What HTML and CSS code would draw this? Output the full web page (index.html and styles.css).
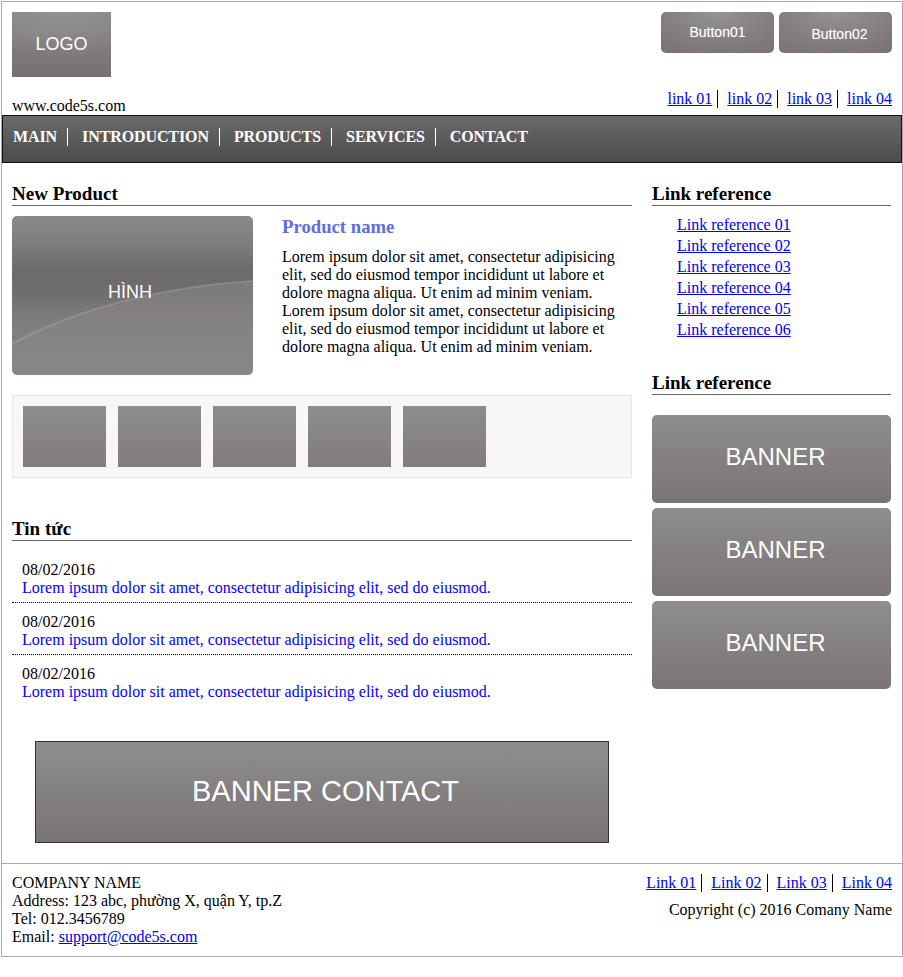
FILE: index.html
```html
<!DOCTYPE html>
<html lang="vi">
<head>
<meta charset="utf-8">
<title>code5s</title>
<link rel="stylesheet" href="styles.css">
</head>
<body>
<div class="wrapper">
  <header class="header">
    <div class="header-left">
      <div class="logo">LOGO</div>
      <div class="site-url">www.code5s.com</div>
    </div>
    <div class="header-right">
      <div class="btn-row">
        <a class="btn btn-1">Button01</a>
        <a class="btn btn-2">Button02</a>
      </div>
      <ul class="sep-links">
        <li><a href="#">link 01</a></li>
        <li><a href="#">link 02</a></li>
        <li><a href="#">link 03</a></li>
        <li><a href="#">link 04</a></li>
      </ul>
    </div>
  </header>

  <nav class="nav">
    <ul class="nav-list">
      <li>MAIN</li>
      <li>INTRODUCTION</li>
      <li>PRODUCTS</li>
      <li>SERVICES</li>
      <li>CONTACT</li>
    </ul>
  </nav>

  <div class="content">
    <main class="main-col">
      <h2 class="sec-title">New Product</h2>
      <div class="product">
        <div class="product-img"><span>HÌNH</span></div>
        <div class="product-info">
          <h3 class="product-name">Product name</h3>
          <p class="product-desc">Lorem ipsum dolor sit amet, consectetur adipisicing elit, sed do eiusmod tempor incididunt ut labore et dolore magna aliqua. Ut enim ad minim veniam.<br>Lorem ipsum dolor sit amet, consectetur adipisicing elit, sed do eiusmod tempor incididunt ut labore et dolore magna aliqua. Ut enim ad minim veniam.</p>
        </div>
      </div>
      <div class="thumbs">
        <div class="thumb"></div>
        <div class="thumb"></div>
        <div class="thumb"></div>
        <div class="thumb"></div>
        <div class="thumb"></div>
      </div>

      <h2 class="sec-title news-title">Tin tức</h2>
      <ul class="news">
        <li class="news-item">
          <div class="news-date">08/02/2016</div>
          <a class="news-link" href="#">Lorem ipsum dolor sit amet, consectetur adipisicing elit, sed do eiusmod.</a>
        </li>
        <li class="news-item">
          <div class="news-date">08/02/2016</div>
          <a class="news-link" href="#">Lorem ipsum dolor sit amet, consectetur adipisicing elit, sed do eiusmod.</a>
        </li>
        <li class="news-item">
          <div class="news-date">08/02/2016</div>
          <a class="news-link" href="#">Lorem ipsum dolor sit amet, consectetur adipisicing elit, sed do eiusmod.</a>
        </li>
      </ul>

      <div class="banner-contact">BANNER CONTACT</div>
    </main>

    <aside class="side-col">
      <h2 class="sec-title">Link reference</h2>
      <ul class="ref-links">
        <li><a href="#">Link reference 01</a></li>
        <li><a href="#">Link reference 02</a></li>
        <li><a href="#">Link reference 03</a></li>
        <li><a href="#">Link reference 04</a></li>
        <li><a href="#">Link reference 05</a></li>
        <li><a href="#">Link reference 06</a></li>
      </ul>
      <h2 class="sec-title">Link reference</h2>
      <div class="banners">
        <div class="banner">BANNER</div>
        <div class="banner">BANNER</div>
        <div class="banner">BANNER</div>
      </div>
    </aside>
  </div>

  <footer class="footer">
    <div class="footer-left">
      <div>COMPANY NAME</div>
      <div>Address: 123 abc, phường X, quận Y, tp.Z</div>
      <div>Tel: 012.3456789</div>
      <div>Email: <a href="#">support@code5s.com</a></div>
    </div>
    <div class="footer-right">
      <ul class="sep-links footer-links">
        <li><a href="#">Link 01</a></li>
        <li><a href="#">Link 02</a></li>
        <li><a href="#">Link 03</a></li>
        <li><a href="#">Link 04</a></li>
      </ul>
      <div class="copyright">Copyright (c) 2016 Comany Name</div>
    </div>
  </footer>
</div>
</body>
</html>
```

FILE: styles.css
```css
* { box-sizing: border-box; }

html, body {
  margin: 0;
  padding: 0;
  background: #fff;
}

body {
  font-family: "Liberation Serif", "Times New Roman", "DejaVu Serif", serif;
  font-size: 16px;
  color: #000;
}

a { color: #0000ee; }

ul { list-style: none; margin: 0; padding: 0; }

.wrapper {
  width: 902px;
  margin: 1px 0 0 1px;
  border: 1px solid #aaa;
  background: #fff;
}

/* ---------- header ---------- */
.header {
  display: flex;
  justify-content: space-between;
  padding: 10px 10px 0;
}

.header-left {
  display: flex;
  flex-direction: column;
}

.logo {
  width: 99px;
  height: 65px;
  display: flex;
  align-items: center;
  justify-content: center;
  font-family: "Liberation Sans", Arial, sans-serif;
  font-size: 18px;
  color: #fff;
  background: radial-gradient(ellipse 90% 70% at 50% 0%, #929092 0%, transparent 100%),
              linear-gradient(#8b888a, #767071);
}

.site-url {
  margin-top: 20px;
  line-height: 18px;
}

.header-right {
  display: flex;
  flex-direction: column;
  align-items: flex-end;
}

.btn-row {
  display: flex;
  gap: 5px;
}

.btn {
  width: 113px;
  height: 41px;
  border-radius: 5px;
  display: flex;
  align-items: center;
  justify-content: center;
  font-family: "Liberation Sans", Arial, sans-serif;
  font-size: 14px;
  color: #fff;
  text-shadow: 0 0 1px rgba(255,255,255,0.4);
  background: radial-gradient(ellipse 80% 110% at 50% 0%, #959395 0%, #847f80 60%, #7a7475 100%);
}

.btn-1 { padding-bottom: 1px; }
.btn-2 { padding: 2px 0 0 8px; }

.sep-links {
  display: flex;
  margin-top: 37px;
}

.sep-links li {
  padding: 0 5px 0 9px;
  border-right: 1px solid #000;
}

.sep-links li:first-child { padding-left: 0; }
.sep-links li:last-child { padding-right: 0; border-right: none; }

/* ---------- nav ---------- */
.nav {
  border: 1px solid #111;
  background: linear-gradient(#6b6a6a, #4d4c4c);
  padding: 12px 10px 16px;
}

.nav-list {
  display: flex;
}

.nav-list li {
  font-weight: bold;
  color: #fff;
  line-height: 18px;
  letter-spacing: -0.1px;
  padding: 0 10px 0 14px;
  border-right: 1px solid #fff;
}

.nav-list li:first-child { padding-left: 0; }
.nav-list li:last-child { border-right: none; }

/* ---------- content ---------- */
.content {
  display: flex;
  gap: 20px;
  padding: 20px 10px 20px;
}

.main-col { width: 620px; }
.side-col { width: 239px; }

.sec-title {
  margin: 0;
  font-size: 19px;
  font-weight: bold;
  line-height: 22px;
  border-bottom: 1px solid #666;
}

.product {
  display: flex;
  gap: 29px;
  margin-top: 10px;
}

.product-img {
  width: 241px;
  height: 159px;
  flex: none;
  border-radius: 5px;
  display: flex;
  align-items: center;
  justify-content: center;
  padding: 0 5px 6px 0;
  font-family: "Liberation Sans", Arial, sans-serif;
  font-size: 18px;
  color: #fff;
  background:
    radial-gradient(400px 203px at 291px 265px, rgba(138,134,135,0.55) 0 98.6%, rgba(160,156,158,0.7) 99.2%, transparent 100%),
    linear-gradient(#8c898b 0%, #7f7c7d 18%, #6d6a6b 34%, #706d6e 48%, #7d7a7b 62%, #858283 85%, #8a8687 100%);
}

.product-info { width: 350px; }

.product-name {
  margin: 0;
  font-size: 18.72px;
  line-height: 21px;
  font-weight: bold;
  color: #5f6de2;
}

.product-desc {
  margin: 11px 0 0;
}

.thumbs {
  margin-top: 20px;
  display: flex;
  gap: 12px;
  padding: 10px;
  background: #f7f7f7;
  border: 1px solid #e6e6e6;
}

.thumb {
  width: 83px;
  height: 61px;
  background: linear-gradient(#8f8d8f, #817c7d);
}

.news-title { margin-top: 40px; }

.news { margin-top: 10px; }

.news-item {
  padding: 10px 10px 5px;
  line-height: 18px;
  border-bottom: 1px dotted #000;
}

.news-item:last-child { border-bottom: none; }

.news-link {
  display: block;
  color: #0000ff;
  text-decoration: none;
}

.banner-contact {
  margin: 35px 23px 0;
  height: 102px;
  border: 1px solid #333;
  display: flex;
  align-items: center;
  justify-content: center;
  padding: 0 0 1px 7px;
  font-family: "Liberation Sans", Arial, sans-serif;
  font-size: 29px;
  color: #fff;
  background: linear-gradient(#8f8d8f, #797474);
}

/* ---------- sidebar ---------- */
.ref-links {
  margin: 8px 0 32px;
  padding-left: 25px;
  line-height: 21px;
}

.banners {
  margin-top: 20px;
  display: flex;
  flex-direction: column;
  gap: 5px;
}

.banner {
  height: 88px;
  border-radius: 5px;
  display: flex;
  align-items: center;
  justify-content: center;
  padding: 0 0 4px 8px;
  font-family: "Liberation Sans", Arial, sans-serif;
  font-size: 24px;
  color: #fff;
  background: linear-gradient(#8f8d8f, #7a7475);
}

/* ---------- footer ---------- */
.footer {
  display: flex;
  justify-content: space-between;
  border-top: 1px solid #aaa;
  padding: 10px;
  line-height: 18px;
}

.footer-right {
  display: flex;
  flex-direction: column;
  align-items: flex-end;
}

.footer-links {
  margin-top: 0;
  margin-bottom: 9px;
}
```
